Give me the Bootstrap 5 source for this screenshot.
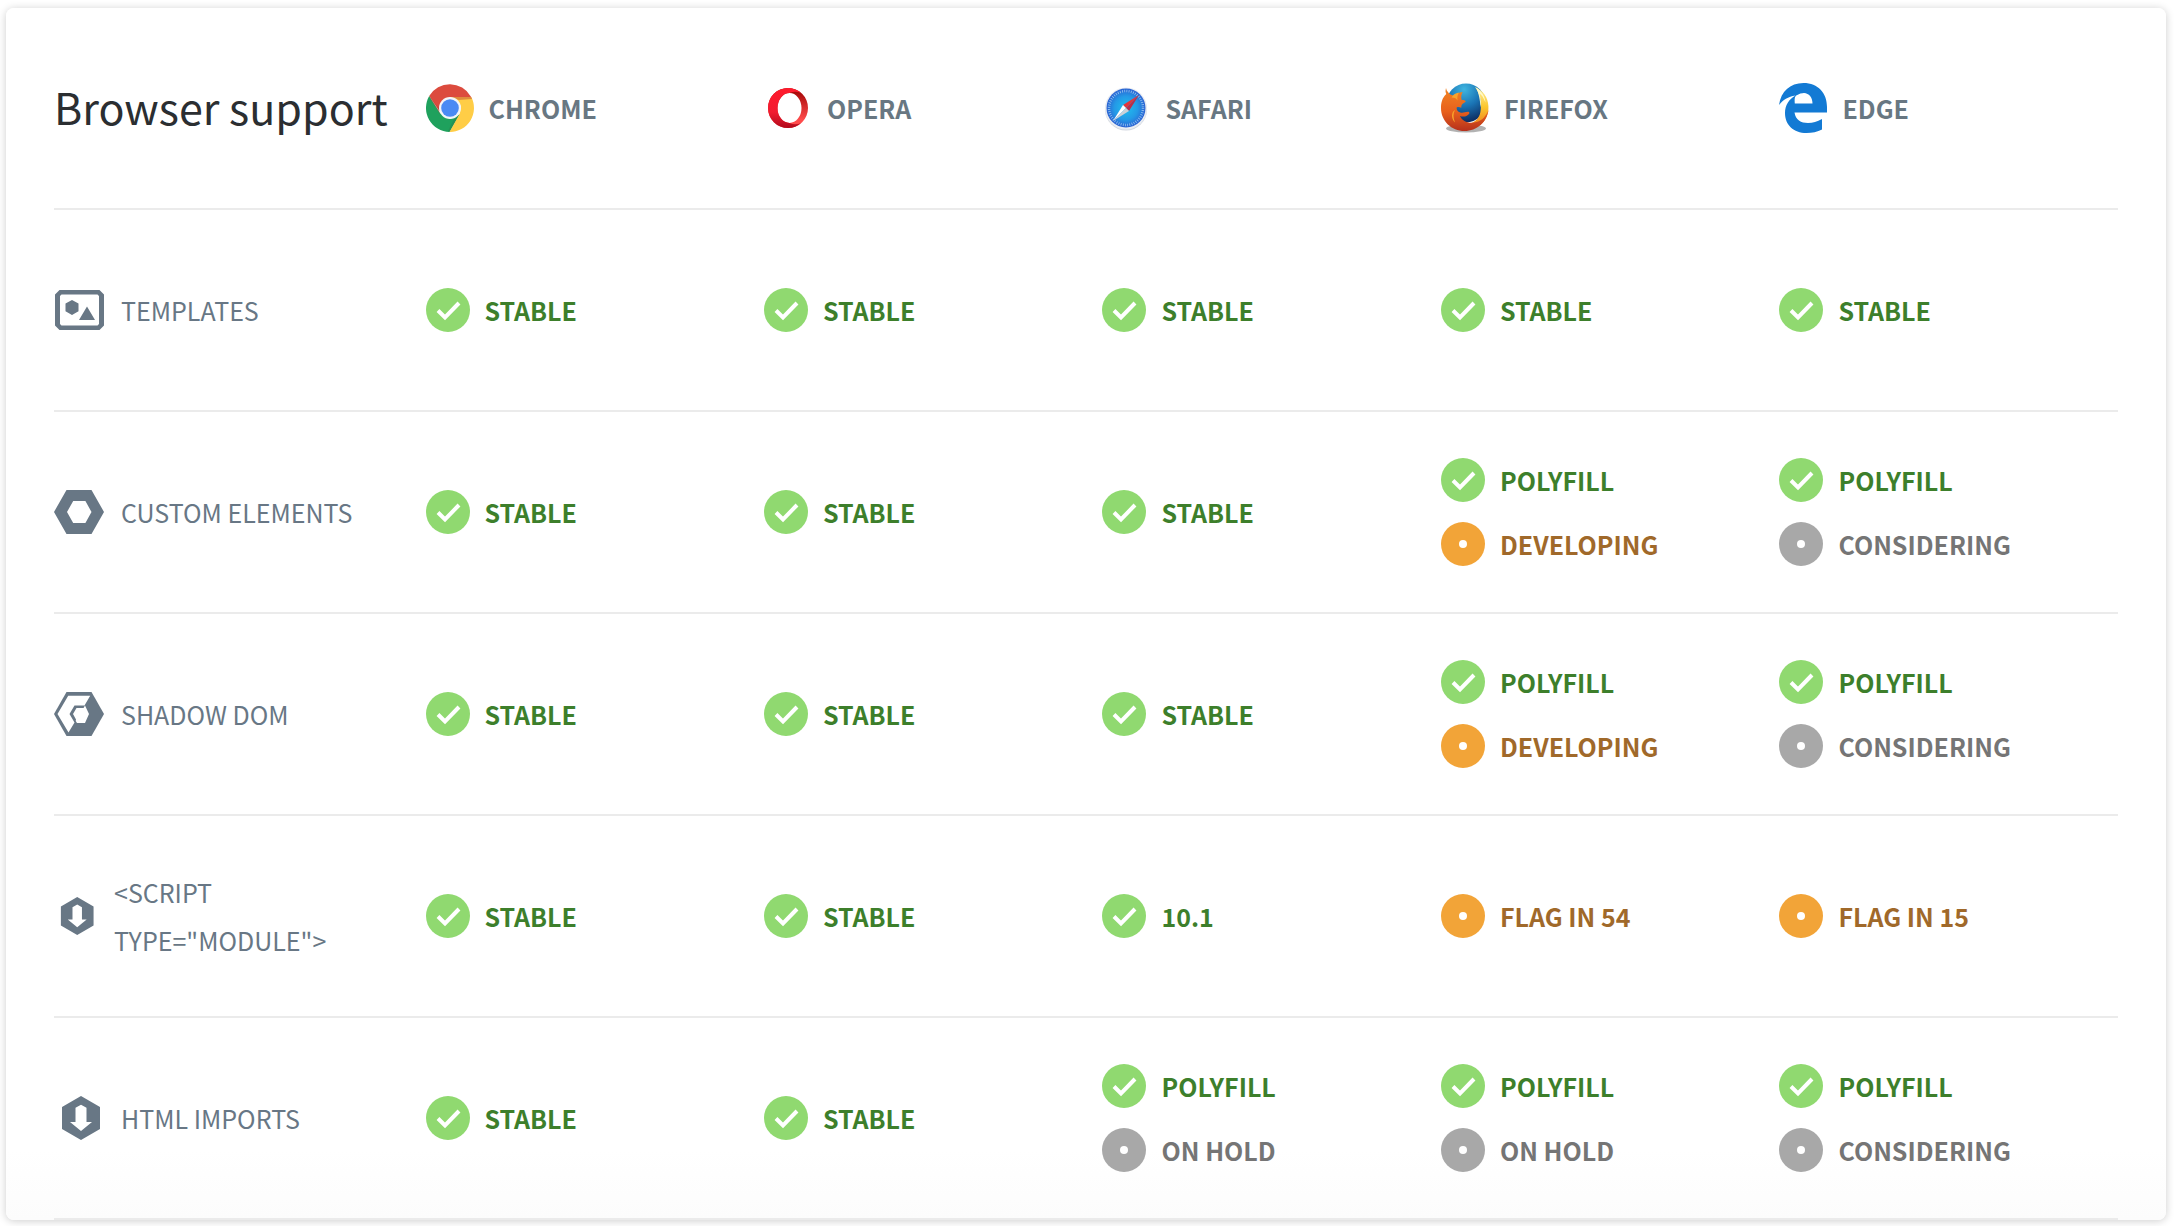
<!DOCTYPE html>
<html lang="en">
<head>
<meta charset="utf-8">
<meta name="viewport" content="width=device-width, initial-scale=1">
<title>Browser support</title>
<link href="https://cdn.jsdelivr.net/npm/bootstrap@5.3.0/dist/css/bootstrap.min.css" rel="stylesheet">
<style>
  body { background: #fff; font-family: "Noto Sans CJK SC", "Noto Sans", sans-serif; font-size: 25px; line-height: 48px; }
  .support-panel { margin: 8px 10px 6px 6px; padding: 0 48px; border: 0; border-radius: 8px;
    background: linear-gradient(#fff calc(100% - 70px), #fcfcfc); box-shadow: 0 1px 8px rgba(0, 0, 0, .2); }
  .support-table { table-layout: fixed; border-collapse: separate; border-spacing: 0; margin: 0; --bs-table-bg: transparent; }
  .support-table th, .support-table td { height: 202px; padding: 0; border: 0; border-bottom: 2px solid #ebebeb; vertical-align: middle; }
  .col-feature { width: 18%; }
  .support-title { font-size: 43px; font-weight: 400; line-height: 48px; color: #2b2e31; white-space: nowrap; margin: 0 0 4px; }
  .tag-line { gap: 15px; text-transform: uppercase; white-space: nowrap; }
  .support-table svg { flex: none; display: block; }
  .browser { color: #687782; font-weight: 700; }
  .feature { color: #687785; font-weight: 400; gap: 17px; white-space: normal; }
  .status { height: 64px; font-weight: 700; }
  .status svg { width: 44px; height: 44px; }
  .status-ok { color: #3d7f2b; }
  .status-wip { color: #a0692a; }
  .status-idle { color: #757575; }
</style>
</head>
<body>
<svg width="0" height="0" class="position-absolute" aria-hidden="true">
  <defs>
    <linearGradient id="operaRing" x1="0" y1="0" x2="0" y2="1"><stop offset="0" stop-color="#ff1b2d"/><stop offset=".6" stop-color="#f21c30"/><stop offset="1" stop-color="#b00a1c"/></linearGradient>
    <linearGradient id="operaInner" x1="0" y1="0" x2="0" y2="1"><stop offset="0" stop-color="#9c0000"/><stop offset=".8" stop-color="#ff4b4b"/></linearGradient>
    <radialGradient id="safariDial"><stop offset="0" stop-color="#1fc0ee"/><stop offset=".6" stop-color="#2499e6"/><stop offset="1" stop-color="#2b62d2"/></radialGradient>
    <radialGradient id="foxGlobe" cx=".45" cy=".15" r=".85"><stop offset="0" stop-color="#3fb5e0"/><stop offset=".5" stop-color="#1a74b5"/><stop offset="1" stop-color="#0d2a5e"/></radialGradient>
    <linearGradient id="foxBody" x1="0" y1="0" x2="0" y2="1"><stop offset="0" stop-color="#f08424"/><stop offset=".55" stop-color="#e8601c"/><stop offset="1" stop-color="#b5301c"/></linearGradient>
    <linearGradient id="foxTail" x1="0" y1="0" x2="0" y2="1"><stop offset="0" stop-color="#fff3a0"/><stop offset=".5" stop-color="#fbc62d"/><stop offset="1" stop-color="#ee7a1c"/></linearGradient>
    <symbol id="ok" viewBox="0 0 44 44"><circle cx="22" cy="22" r="22" fill="#90d970"/><path d="M12 22.5l7 7L33 15" fill="none" stroke="#fff" stroke-width="4"/></symbol>
    <symbol id="wip" viewBox="0 0 44 44"><circle cx="22" cy="22" r="22" fill="#f2a438"/><circle cx="22" cy="22" r="4" fill="#fff"/></symbol>
    <symbol id="idle" viewBox="0 0 44 44"><circle cx="22" cy="22" r="22" fill="#a8a8a8"/><circle cx="22" cy="22" r="4" fill="#fff"/></symbol>
    <symbol id="import" viewBox="0 0 50 44"><path fill="#687785" fill-rule="evenodd" d="M27 0l19 11v22L27 44 8 33V11zM27 8.700l-5.500 3V26H16l11 9 11-9h-5.500V11.700z"/></symbol>
  </defs>
</svg>

<main class="card support-panel">
  <table class="table support-table">
    <thead>
      <tr>
        <th class="col-feature" scope="col"><h1 class="support-title">Browser support</h1></th>
        <th scope="col"><div class="tag-line browser d-flex align-items-center">
          <svg width="48" height="48" viewBox="0 0 48 48"><path fill="#dc4b3e" d="M3.200 12A24 24 0 0 1 44.800 12.500L45 13H24L13.500 27z"/><path fill="#1fa15d" d="M3.200 12A24 24 0 0 0 23.500 48L34 30 24 35 14 29z"/><path fill="#ffcd46" d="M24 13H45.300A24 24 0 0 1 23.500 48L33.500 30 35 22z"/><path fill="#b93c33" opacity=".45" d="M24 13h21.300l.7 2-13 1zM3.200 12L5 16l9 14-1-6z"/><path fill="#2d7b4b" opacity=".4" d="M23.500 48L33 31l-5 4-6 12z"/><circle cx="24" cy="24" r="11" fill="#f3f5f7"/><circle cx="24" cy="24" r="8.800" fill="#4a8af4"/></svg>
          <span>Chrome</span></div></th>
        <th scope="col"><div class="tag-line browser d-flex align-items-center">
          <svg width="48" height="48" viewBox="0 0 48 48"><path fill="url(#operaInner)" fill-rule="evenodd" d="M24 4a20 20 0 1 1 0 40 20 20 0 0 1 0-40zM25.500 9a12 15 0 1 0 0 30 12 15 0 0 0 0-30z"/><path fill="url(#operaRing)" d="M24 4a20 20 0 0 0 0 40c5 0 10-2 13-5-4 2-8 1.500-11.500 0a12 15 0 0 1 0-30C29 7.500 33 7 37 9c-3-3-8-5-13-5z"/></svg>
          <span>Opera</span></div></th>
        <th scope="col"><div class="tag-line browser d-flex align-items-center">
          <svg width="48" height="48" viewBox="0 0 48 48"><circle cx="24" cy="25.500" r="21" fill="#d3d8df"/><circle cx="24" cy="24.500" r="21" fill="#e9edf3"/><circle cx="24" cy="24" r="19.500" fill="url(#safariDial)"/><circle cx="24" cy="24" r="17" fill="none" stroke="#b9dcf8" stroke-opacity=".75" stroke-width="2.500" stroke-dasharray=".8 1.425"/><path fill="#e5343a" d="M37 11L21 21 24 24z"/><path fill="#b92f4b" d="M37 11L27 27 24 24z"/><path fill="#fff" d="M11 37L21 21 24 24z"/><path fill="#cbd1d8" d="M11 37L27 27 24 24z"/></svg>
          <span>Safari</span></div></th>
        <th scope="col"><div class="tag-line browser d-flex align-items-center">
          <svg width="48" height="50" viewBox="0 0 48 50"><ellipse cx="25" cy="45.500" rx="20" ry="4" fill="#555" opacity=".45"/><circle cx="25" cy="20" r="19.500" fill="url(#foxGlobe)"/><path fill="url(#foxTail)" d="M34 4c8 3.500 13 10 13.400 19 .6 9-4 17-11 21l-13-2c9-1 15-6 16-13 1.500-8 .5-17-5.400-25z"/><path fill="#fff8c8" d="M35 4.500c6 4 9 9 9.500 15-2-5-4-8-6-9 1.500 6 2 10 1 14-.5-8-1.500-14-4.500-20z"/><path fill="url(#foxBody)" d="M5 5c-.8 3-.5 4 .3 6C1 15 0 20 0 25c0 13 10.500 23 23.500 23C36 48 46 39 47.500 27c-2.500 6-6 10.500-12 12-7 2-14 0-16.500-6 3.500 1.200 7 .4 9-2 .7-.7.500-2-.7-2.200-3.500-.1-5 1.500-8 .7-2.700-.7-4-3-3.600-5 1.500-.8 3-.4 4.600.2 0-2 .2-3 1.400-4l3-2c-.2-1.500-2-1.400-4-1.600-1-2.600-.3-6 1-8-4 .6-6.500 2-8 4C10.500 12 8 11.400 7 9 6 8 5.500 7 5 5z"/><path fill="#f9a32b" d="M18 9.500c-4 .8-6 2.500-7.500 5 3.500 0 5 1 6 3-.5-3 0-5.500 1.500-8zM14 27c-4 2-4 9 0 12.500-2-5-2-9 0-12.500z"/></svg>
          <span>Firefox</span></div></th>
        <th scope="col"><div class="tag-line browser d-flex align-items-center">
          <svg width="48" height="50" viewBox="0 0 48 50"><path fill="#137ad4" d="M0 22C2 8.500 11 0 24.500 0 39 0 48 10 48 24v5.500H15.500C16.500 37 22 40 29 40c5 0 9-1.200 14-4v10.500C38.500 49 33 50 27.500 50 14.500 50 6 42 6 30c0-7.500 4-14 10.500-17.500C9 13.500 4 17 0 22zM15.800 20.500h17.700C33.500 14 30 10.500 25 10c-2 0-5 .8-7.800 2.500-2 1.500-1.500 5-1.400 8z"/></svg>
          <span>Edge</span></div></th>
      </tr>
    </thead>
    <tbody>
      <tr>
        <th scope="row"><div class="tag-line feature d-flex align-items-center"><svg width="50" height="44" viewBox="0 0 50 44"><path fill="#687785" fill-rule="evenodd" d="M5.500 2h40l4.500 4.500v31L45.500 42h-40L1 37.500v-31zM7.500 6.500L6 8v28l1.500 1.500h36L45 36V8l-1.500-1.500z"/><path fill="#687785" d="M18 12l6.500 3.500v7.800L18 27l-6.500-3.700v-7.800zM33 18.500L41 32H25z"/></svg><span>Templates</span></div></th>
        <td><div class="tag-line status status-ok d-flex align-items-center"><svg><use href="#ok"/></svg>Stable</div></td>
        <td><div class="tag-line status status-ok d-flex align-items-center"><svg><use href="#ok"/></svg>Stable</div></td>
        <td><div class="tag-line status status-ok d-flex align-items-center"><svg><use href="#ok"/></svg>Stable</div></td>
        <td><div class="tag-line status status-ok d-flex align-items-center"><svg><use href="#ok"/></svg>Stable</div></td>
        <td><div class="tag-line status status-ok d-flex align-items-center"><svg><use href="#ok"/></svg>Stable</div></td>
      </tr>
      <tr>
        <th scope="row"><div class="tag-line feature d-flex align-items-center"><svg width="50" height="44" viewBox="0 0 50 44"><path fill="#687785" fill-rule="evenodd" d="M0 22L12.500 0h25L50 22 37.500 44h-25zM13 22l6.200 11h12.200L37.500 22 31.400 11H19.200z"/></svg><span>Custom Elements</span></div></th>
        <td><div class="tag-line status status-ok d-flex align-items-center"><svg><use href="#ok"/></svg>Stable</div></td>
        <td><div class="tag-line status status-ok d-flex align-items-center"><svg><use href="#ok"/></svg>Stable</div></td>
        <td><div class="tag-line status status-ok d-flex align-items-center"><svg><use href="#ok"/></svg>Stable</div></td>
        <td><div class="tag-line status status-ok d-flex align-items-center"><svg><use href="#ok"/></svg>Polyfill</div>
          <div class="tag-line status status-wip d-flex align-items-center"><svg><use href="#wip"/></svg>Developing</div></td>
        <td><div class="tag-line status status-ok d-flex align-items-center"><svg><use href="#ok"/></svg>Polyfill</div>
          <div class="tag-line status status-idle d-flex align-items-center"><svg><use href="#idle"/></svg>Considering</div></td>
      </tr>
      <tr>
        <th scope="row"><div class="tag-line feature d-flex align-items-center"><svg width="50" height="44" viewBox="0 0 50 44"><path fill="#687785" d="M0 22L12.500 0h25L50 22 37.500 44h-25z"/><path fill="#fff" d="M3.500 22L14.200 3.700h22L30.500 13.500H20.500L15.500 22l5 8.500-6 10zM19 22l3.500-6h7l1.500-2.500L35 22l-4 9h-8l-1.300-2L22 27.500z"/></svg><span>Shadow DOM</span></div></th>
        <td><div class="tag-line status status-ok d-flex align-items-center"><svg><use href="#ok"/></svg>Stable</div></td>
        <td><div class="tag-line status status-ok d-flex align-items-center"><svg><use href="#ok"/></svg>Stable</div></td>
        <td><div class="tag-line status status-ok d-flex align-items-center"><svg><use href="#ok"/></svg>Stable</div></td>
        <td><div class="tag-line status status-ok d-flex align-items-center"><svg><use href="#ok"/></svg>Polyfill</div>
          <div class="tag-line status status-wip d-flex align-items-center"><svg><use href="#wip"/></svg>Developing</div></td>
        <td><div class="tag-line status status-ok d-flex align-items-center"><svg><use href="#ok"/></svg>Polyfill</div>
          <div class="tag-line status status-idle d-flex align-items-center"><svg><use href="#idle"/></svg>Considering</div></td>
      </tr>
      <tr>
        <th scope="row"><div class="tag-line feature d-flex align-items-center"><svg width="43" height="38"><use href="#import"/></svg><span>&lt;script<br>type="module"&gt;</span></div></th>
        <td><div class="tag-line status status-ok d-flex align-items-center"><svg><use href="#ok"/></svg>Stable</div></td>
        <td><div class="tag-line status status-ok d-flex align-items-center"><svg><use href="#ok"/></svg>Stable</div></td>
        <td><div class="tag-line status status-ok d-flex align-items-center"><svg><use href="#ok"/></svg>10.1</div></td>
        <td><div class="tag-line status status-wip d-flex align-items-center"><svg><use href="#wip"/></svg>Flag in 54</div></td>
        <td><div class="tag-line status status-wip d-flex align-items-center"><svg><use href="#wip"/></svg>Flag in 15</div></td>
      </tr>
      <tr>
        <th scope="row"><div class="tag-line feature d-flex align-items-center"><svg width="50" height="44"><use href="#import"/></svg><span>HTML Imports</span></div></th>
        <td><div class="tag-line status status-ok d-flex align-items-center"><svg><use href="#ok"/></svg>Stable</div></td>
        <td><div class="tag-line status status-ok d-flex align-items-center"><svg><use href="#ok"/></svg>Stable</div></td>
        <td><div class="tag-line status status-ok d-flex align-items-center"><svg><use href="#ok"/></svg>Polyfill</div>
          <div class="tag-line status status-idle d-flex align-items-center"><svg><use href="#idle"/></svg>On hold</div></td>
        <td><div class="tag-line status status-ok d-flex align-items-center"><svg><use href="#ok"/></svg>Polyfill</div>
          <div class="tag-line status status-idle d-flex align-items-center"><svg><use href="#idle"/></svg>On hold</div></td>
        <td><div class="tag-line status status-ok d-flex align-items-center"><svg><use href="#ok"/></svg>Polyfill</div>
          <div class="tag-line status status-idle d-flex align-items-center"><svg><use href="#idle"/></svg>Considering</div></td>
      </tr>
    </tbody>
  </table>
</main>
<script src="https://cdn.jsdelivr.net/npm/bootstrap@5.3.0/dist/js/bootstrap.bundle.min.js"></script>
</body>
</html>
